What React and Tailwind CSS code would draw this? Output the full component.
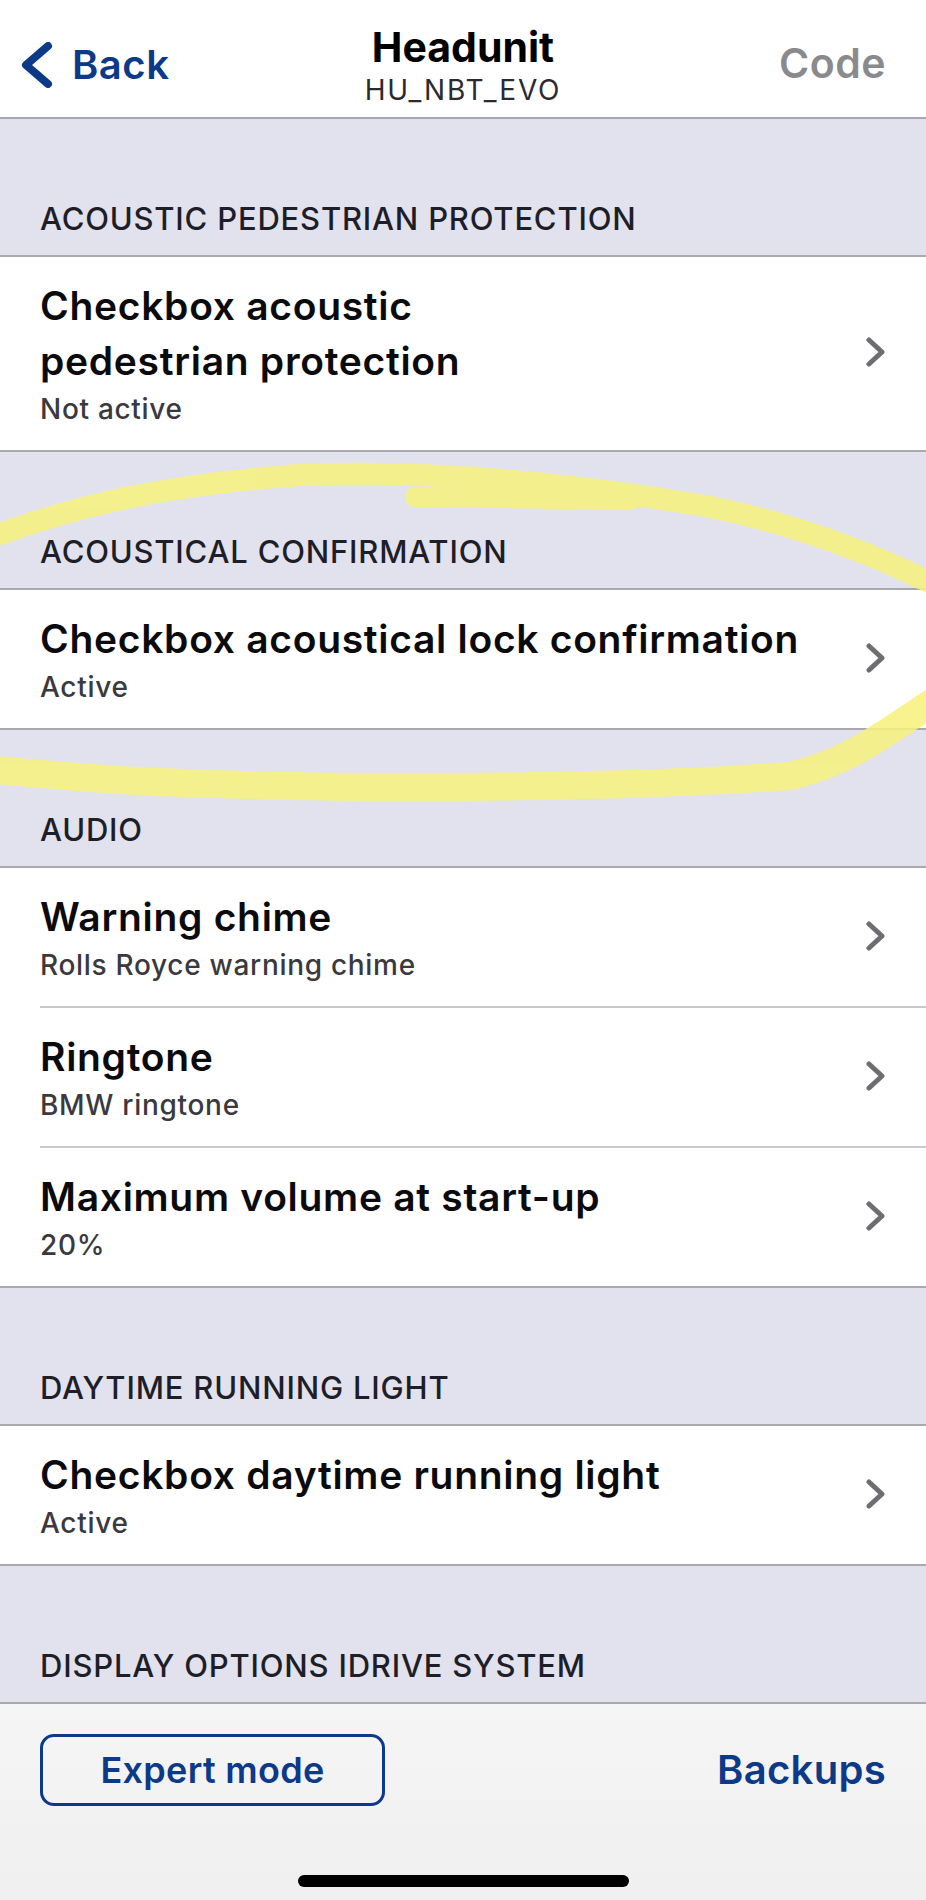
import React from 'react'

const SECTIONS = [
  {
    title: 'ACOUSTIC PEDESTRIAN PROTECTION',
    rows: [{ title: ['Checkbox acoustic', 'pedestrian protection'], sub: 'Not active' }],
  },
  {
    title: 'ACOUSTICAL CONFIRMATION',
    rows: [{ title: ['Checkbox acoustical lock confirmation'], sub: 'Active' }],
  },
  {
    title: 'AUDIO',
    rows: [
      { title: ['Warning chime'], sub: 'Rolls Royce warning chime' },
      { title: ['Ringtone'], sub: 'BMW ringtone' },
      { title: ['Maximum volume at start-up'], sub: '20%' },
    ],
  },
  {
    title: 'DAYTIME RUNNING LIGHT',
    rows: [{ title: ['Checkbox daytime running light'], sub: 'Active' }],
  },
  { title: 'DISPLAY OPTIONS IDRIVE SYSTEM', rows: [] },
]

function Chevron() {
  return (
    <svg width="20" height="30" viewBox="0 0 20 30" className="shrink-0">
      <polyline points="3,3 16,15 3,27" fill="none" stroke="#6d6d72" strokeWidth="5" strokeLinecap="round" strokeLinejoin="round" />
    </svg>
  )
}

function Row({ title, sub, last }) {
  return (
    <div className="pl-[40px]">
      <div className={`flex items-center justify-between pr-[40px] pt-[21px] ${last ? 'pb-[24px]' : 'pb-[24px] border-b-2 border-[#c9c9cd]'}`}>
        <div>
          <div className="text-[39px] leading-[55px] font-semibold text-[#0b0b0d] tracking-[0.7px]">
            {title.map((line, i) => (
              <div key={i}>{line}</div>
            ))}
          </div>
          <div className="mt-[4px] text-[28px] leading-[34px] font-medium text-[#3a3a3e] tracking-[0.7px]">{sub}</div>
        </div>
        <Chevron />
      </div>
    </div>
  )
}

export default function App() {
  return (
    <div className="relative w-[926px] h-[1900px] overflow-hidden bg-[#e2e2ee] font-['Inter',sans-serif]">
      {/* Nav bar */}
      <div className="h-[119px] bg-white border-b-2 border-[#a9a9ad] grid grid-cols-[1fr_auto_1fr]">
        <div className="flex items-center self-start pt-[42px] pl-[20px] gap-[18px] text-[#0c3a88]">
          <svg width="34" height="46" viewBox="0 0 34 46">
            <polyline points="28,4 6,23 28,42" fill="none" stroke="#0c3a88" strokeWidth="8" strokeLinecap="round" strokeLinejoin="round" />
          </svg>
          <span className="text-[40px] leading-[40px] font-semibold tracking-[0.5px]">Back</span>
        </div>
        <div className="flex flex-col items-center pt-[27px]">
          <div className="text-[41px] leading-[41px] font-bold text-black">Headunit</div>
          <div className="mt-[8px] text-[28px] leading-[28px] text-[#2b2b2e] tracking-[1.8px]">HU_NBT_EVO</div>
        </div>
        <div className="flex justify-end pt-[43px] pr-[40px]">
          <span className="text-[41px] leading-[41px] font-semibold text-[#8a8a8e] tracking-[0.5px]">Code</span>
        </div>
      </div>

      {SECTIONS.map((sec) => (
        <div key={sec.title}>
          <div className="h-[136px] flex items-end pl-[40px] pb-[18px]">
            <span className="text-[31px] leading-[36px] font-medium text-[#1e1e28] tracking-[0.8px]">{sec.title}</span>
          </div>
          {sec.rows.length > 0 && (
            <div className="bg-white border-y-2 border-[#a9a9ad]">
              {sec.rows.map((r, i) => (
                <Row key={i} title={r.title} sub={r.sub} last={i === sec.rows.length - 1} />
              ))}
            </div>
          )}
        </div>
      ))}

      {/* Bottom toolbar */}
      <div className="h-[210px] border-t-2 border-[#a9a9ad] bg-gradient-to-b from-[#f5f5f5] to-[#efefef] flex flex-col">
        <div className="flex items-center justify-between pl-[40px] pr-[40px] pt-[30px]">
          <div className="w-[345px] h-[72px] rounded-[14px] border-[3px] border-[#0c3a88] flex items-center justify-center">
            <span className="text-[36px] font-semibold text-[#0c3a88] tracking-[0.3px]">Expert mode</span>
          </div>
          <span className="text-[40px] font-semibold text-[#0c3a88] tracking-[0.3px]">Backups</span>
        </div>
      </div>

      {/* Home indicator */}
      <div className="absolute left-[298px] top-[1875px] w-[331px] h-[12px] rounded-full bg-black" />

      {/* Highlighter annotation */}
      <svg className="absolute left-0 top-0 pointer-events-none" width="926" height="1900" viewBox="0 0 926 1900">
        <g fill="none" stroke="#f7f27c" strokeLinecap="round" opacity="0.85">
          <path d="M -30 545 C 60 510, 150 486, 300 475 C 420 470, 560 482, 700 505 C 790 522, 880 555, 960 598" strokeWidth="22" />
          <path d="M 415 497 L 630 500" strokeWidth="20" />
          <path d="M 960 685 C 900 720, 860 760, 790 776 C 600 790, 300 790, 120 780 C 60 776, 20 772, -30 768" strokeWidth="28" />
        </g>
      </svg>
    </div>
  )
}
